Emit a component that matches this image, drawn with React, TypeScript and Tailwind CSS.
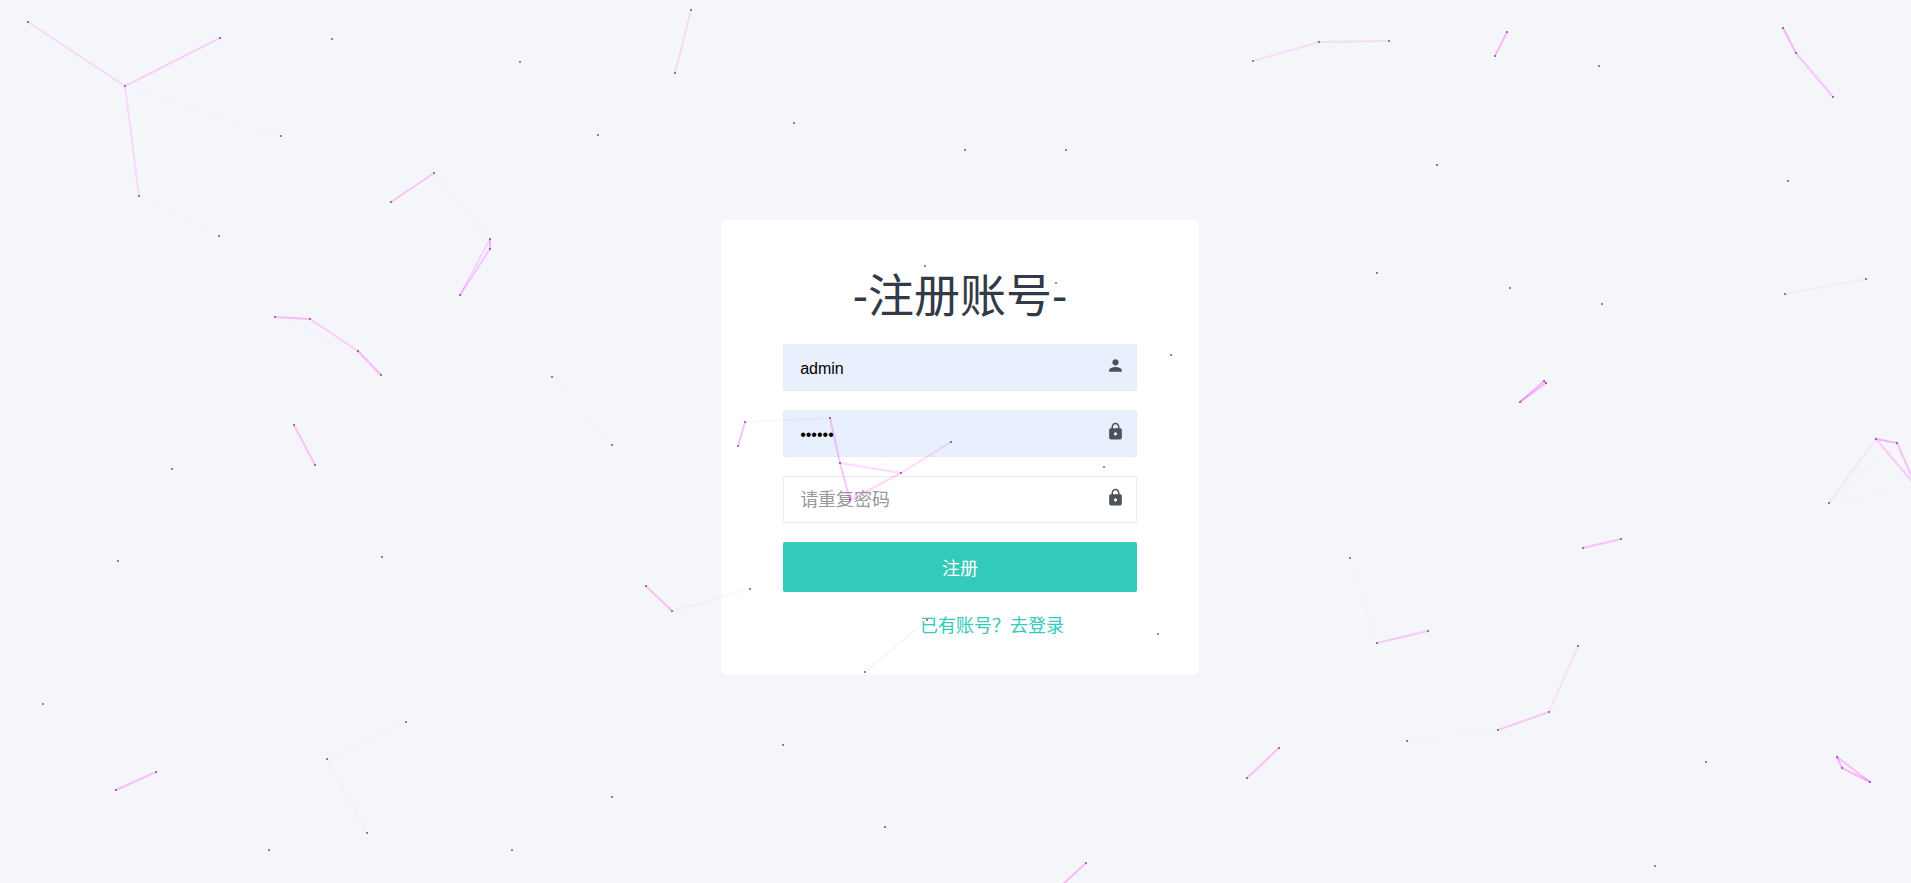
import { useState } from "react";
import type { ReactNode } from "react";
import { MdLock, MdPerson } from "react-icons/md";

type Point = [number, number];
type Link = [number, number, number, number, number];

const POINTS: Point[] = [
  [28, 22], [220, 38], [125, 86], [139, 196], [281, 136], [219, 236], [332, 39],
  [434, 173], [391, 202], [490, 239], [490, 249], [460, 295], [691, 10], [675, 73],
  [520, 62], [598, 135], [794, 123], [965, 150], [1066, 150], [1253, 61], [1319, 42],
  [1389, 41], [1507, 32], [1495, 56], [1599, 66], [1783, 28], [1796, 53], [1833, 97],
  [1437, 165], [1788, 181], [1377, 273], [1510, 288], [1602, 304], [1785, 294],
  [1866, 279], [1544, 381], [1546, 383], [1520, 402], [1876, 439], [1897, 443],
  [1829, 503], [1583, 548], [1621, 539], [1350, 558], [1377, 643], [1428, 631],
  [1578, 646], [1549, 712], [1498, 730], [1407, 741], [1279, 748], [1247, 778],
  [1706, 762], [1837, 757], [1842, 768], [1870, 782], [1655, 866], [275, 317],
  [310, 319], [358, 351], [381, 375], [294, 425], [315, 465], [172, 469], [118, 561],
  [382, 557], [552, 377], [612, 445], [646, 586], [43, 704], [156, 772], [116, 790],
  [406, 722], [327, 759], [367, 833], [269, 850], [512, 850], [612, 797], [672, 611],
  [925, 266], [1056, 283], [1171, 355], [745, 422], [738, 446], [830, 418], [951, 442],
  [840, 463], [901, 473], [850, 500], [1104, 467], [750, 589], [927, 620], [865, 672],
  [1158, 634], [783, 745], [885, 827], [1086, 863],
];

// x1, y1, x2, y2, opacity
const LINKS: Link[] = [
  [28, 22, 125, 86, 0.12],
  [220, 38, 125, 86, 0.15],
  [125, 86, 139, 196, 0.12],
  [125, 86, 281, 136, 0.01],
  [139, 196, 219, 236, 0.01],
  [391, 202, 434, 173, 0.2],
  [434, 173, 490, 239, 0.02],
  [490, 239, 490, 249, 0.28],
  [490, 249, 460, 295, 0.2],
  [490, 239, 460, 295, 0.13],
  [691, 10, 675, 73, 0.12],
  [1253, 61, 1319, 42, 0.1],
  [1319, 42, 1389, 41, 0.11],
  [1507, 32, 1495, 56, 0.26],
  [1783, 28, 1796, 53, 0.26],
  [1796, 53, 1833, 97, 0.19],
  [1783, 28, 1833, 97, 0.02],
  [1785, 294, 1866, 279, 0.05],
  [1544, 381, 1520, 402, 0.26],
  [1546, 383, 1520, 402, 0.26],
  [1544, 381, 1546, 383, 0.3],
  [1876, 439, 1897, 443, 0.27],
  [1897, 443, 1916, 486, 0.22],
  [1876, 439, 1916, 486, 0.17],
  [1876, 439, 1829, 503, 0.07],
  [1897, 443, 1829, 503, 0.01],
  [1829, 503, 1916, 486, 0.01],
  [1583, 548, 1621, 539, 0.22],
  [1350, 558, 1377, 643, 0.01],
  [1377, 643, 1428, 631, 0.18],
  [1578, 646, 1549, 712, 0.08],
  [1549, 712, 1498, 730, 0.18],
  [1498, 730, 1407, 741, 0.01],
  [1279, 748, 1247, 778, 0.22],
  [1837, 757, 1842, 768, 0.28],
  [1842, 768, 1870, 782, 0.25],
  [1837, 757, 1870, 782, 0.23],
  [275, 317, 310, 319, 0.24],
  [310, 319, 358, 351, 0.16],
  [358, 351, 381, 375, 0.25],
  [275, 317, 358, 351, 0.01],
  [310, 319, 381, 375, 0.01],
  [294, 425, 315, 465, 0.21],
  [552, 377, 612, 445, 0.01],
  [646, 586, 672, 611, 0.22],
  [672, 611, 750, 589, 0.04],
  [156, 772, 116, 790, 0.22],
  [406, 722, 327, 759, 0.02],
  [327, 759, 367, 833, 0.03],
  [745, 422, 738, 446, 0.25],
  [745, 422, 830, 418, 0.04],
  [830, 418, 840, 463, 0.22],
  [840, 463, 850, 500, 0.23],
  [840, 463, 901, 473, 0.15],
  [901, 473, 850, 500, 0.16],
  [901, 473, 951, 442, 0.15],
  [830, 418, 901, 473, 0.01],
  [927, 620, 865, 672, 0.05],
  [1086, 863, 1062, 885, 0.26],
];

const Particles = () => (
  <svg
    className="absolute inset-0 w-full h-full pointer-events-none"
    aria-hidden="true"
  >
    <g fill="#000000" fillOpacity="0.45">
      {POINTS.map(([x, y]) => (
        <rect key={`${x}-${y}`} x={x - 1} y={y - 1} width="2" height="2" />
      ))}
    </g>
    <g stroke="#ff00ff" strokeWidth="2">
      {LINKS.map(([x1, y1, x2, y2, opacity]) => (
        <line
          key={`${x1}-${y1}-${x2}-${y2}`}
          x1={x1}
          y1={y1}
          x2={x2}
          y2={y2}
          strokeOpacity={opacity}
        />
      ))}
    </g>
  </svg>
);

interface FieldProps {
  type: string;
  label: string;
  value: string;
  onChange: (value: string) => void;
  icon: ReactNode;
}

const Field = ({ type, label, value, onChange, icon }: FieldProps) => (
  <div className="relative mb-[19px]">
    <input
      type={type}
      aria-label={label}
      value={value}
      onChange={(e) => onChange(e.target.value)}
      placeholder={label}
      className="block w-full h-[47px] pt-[3px] pl-4 pr-10 text-base text-black bg-[#e8f0fe] placeholder-shown:bg-white border border-[#ebebeb] rounded-xs placeholder:text-lg placeholder:text-[#999999] focus:outline-none focus:border-[#33cabb]"
    />
    <span className="absolute right-3 top-3 text-[19px] text-[#4d5259]">
      {icon}
    </span>
  </div>
);

const App = () => {
  const [username, setUsername] = useState("admin");
  const [password, setPassword] = useState("123456");
  const [repeat, setRepeat] = useState("");

  return (
    <main className="relative min-h-screen flex items-center justify-center overflow-hidden bg-[#f5f6fa] font-['Liberation_Sans','Noto_Sans_CJK_SC',sans-serif]">
      <div className="w-1/4 min-w-[360px] mt-3 ml-[9px] px-[62px] pt-[46px] pb-[37px] bg-white rounded-md">
        <h1 className="mb-[18px] text-center text-[46px] leading-[60px] text-[#313a46]">
          -注册账号-
        </h1>
        <form onSubmit={(e) => e.preventDefault()}>
          <Field
            type="text"
            label="请输入用户名"
            value={username}
            onChange={setUsername}
            icon={<MdPerson />}
          />
          <Field
            type="password"
            label="请输入密码"
            value={password}
            onChange={setPassword}
            icon={<MdLock />}
          />
          <Field
            type="password"
            label="请重复密码"
            value={repeat}
            onChange={setRepeat}
            icon={<MdLock />}
          />
          <button
            type="submit"
            className="block w-full h-[50px] pt-1 rounded-xs bg-[#33cabb] text-lg text-white"
          >
            注册
          </button>
        </form>
        <p className="mt-[22px] pl-16 text-center text-lg leading-6">
          <a href="#login" className="text-[#33cabb]">
            已有账号？去登录
          </a>
        </p>
      </div>
      <Particles />
    </main>
  );
};

export default App;
